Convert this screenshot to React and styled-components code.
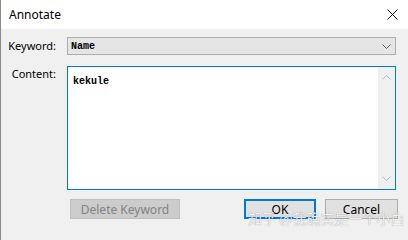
import React from "react";
import styled, { createGlobalStyle } from "styled-components";

const Global = createGlobalStyle`
  html, body {
    margin: 0;
    padding: 0;
    background: #f0f0f0;
  }
  body {
    font-family: "Noto Sans", "Liberation Sans", sans-serif;
  }
`;

const Window = styled.div`
  position: relative;
  width: 408px;
  height: 240px;
  box-sizing: border-box;
  border-left: 1px solid #8a8a8a;
  background: #f0f0f0;
  overflow: hidden;
`;

const TitleBar = styled.div`
  height: 29px;
  background: #ffffff;
  display: flex;
  align-items: center;
  justify-content: space-between;
  padding: 0 10px 0 8px;
  font-size: 12px;
  color: #000;
`;

const Body = styled.div`
  display: grid;
  grid-template-columns: 55px 329px;
  column-gap: 11px;
  row-gap: 11px;
  padding-top: 8px;
`;

const Label = styled.div`
  font-size: 11px;
  color: #000;
  text-align: right;
  align-self: ${(p) => (p.$top ? "start" : "center")};
  padding-top: ${(p) => (p.$top ? "1px" : "0")};
  line-height: 14px;
`;

const Select = styled.div`
  height: 18px;
  box-sizing: border-box;
  border: 1px solid #adadad;
  background: #e5e5e5;
  display: flex;
  align-items: center;
  justify-content: space-between;
  padding: 0 4px 0 3px;
`;

const Mono = styled.span`
  font-family: "Liberation Mono", "DejaVu Sans Mono", monospace;
  font-size: 10px;
  font-weight: bold;
  color: #000;
`;

const TextArea = styled.div`
  height: 124px;
  box-sizing: border-box;
  border: 1px solid #0078d7;
  background: #ffffff;
  display: flex;
`;

const TextBody = styled.div`
  flex: 1;
  padding: 4px 5px;
  line-height: 14px;
`;

const ScrollBar = styled.div`
  width: 17px;
  background: #f0f0f0;
  display: flex;
  flex-direction: column;
  justify-content: space-between;
  align-items: center;
  padding: 8px 0;
`;

const ButtonRow = styled.div`
  grid-column: 2;
  display: flex;
  align-items: center;
  margin-top: -2px;
  padding-left: 3px;
  margin-right: -2px;
`;

const Button = styled.div`
  height: 20px;
  width: ${(p) => p.$w}px;
  box-sizing: border-box;
  display: flex;
  align-items: center;
  justify-content: center;
  font-size: 12px;
  background: ${(p) => (p.$disabled ? "#cccccc" : "#e1e1e1")};
  color: ${(p) => (p.$disabled ? "#838383" : "#000")};
  border: ${(p) =>
    p.$default ? "2px solid #0078d7" : p.$disabled ? "1px solid #bfbfbf" : "1px solid #adadad"};
  margin-left: ${(p) => p.$ml || 0}px;
`;

const Watermark = styled.div`
  position: absolute;
  left: 247px;
  top: 208px;
  font-family: "Noto Sans CJK SC", sans-serif;
  font-size: 14px;
  color: rgba(255, 255, 255, 0.9);
  text-shadow: 0 0 1px rgba(0, 0, 0, 0.45);
  white-space: nowrap;
  pointer-events: none;
`;

const Chevron = ({ up, color = "#606060" }) => (
  <svg width="9" height="5" viewBox="0 0 9 5">
    <path
      d={up ? "M0.5 4.5 L4.5 0.5 L8.5 4.5" : "M0.5 0.5 L4.5 4.5 L8.5 0.5"}
      fill="none"
      stroke={color}
      strokeWidth="1"
    />
  </svg>
);

const Close = () => (
  <svg width="11" height="11" viewBox="0 0 11 11">
    <path d="M0.5 0.5 L10.5 10.5 M10.5 0.5 L0.5 10.5" stroke="#111" strokeWidth="1" />
  </svg>
);

const App = () => {
  return (
    <Window>
      <Global />
      <TitleBar>
        <span>Annotate</span>
        <Close />
      </TitleBar>
      <Body>
        <Label>Keyword:</Label>
        <Select>
          <Mono>Name</Mono>
          <Chevron />
        </Select>
        <Label $top>Content:</Label>
        <TextArea>
          <TextBody>
            <Mono>kekule</Mono>
          </TextBody>
          <ScrollBar>
            <Chevron up color="#b8b8b8" />
            <Chevron color="#b8b8b8" />
          </ScrollBar>
        </TextArea>
        <ButtonRow>
          <Button $w={110} $disabled>Delete Keyword</Button>
          <Button $w={72} $default $ml={64}>OK</Button>
          <Button $w={73} $ml={9}>Cancel</Button>
        </ButtonRow>
      </Body>
      <Watermark>知乎 @我确实是一个小白</Watermark>
    </Window>
  );
};

export default App;
